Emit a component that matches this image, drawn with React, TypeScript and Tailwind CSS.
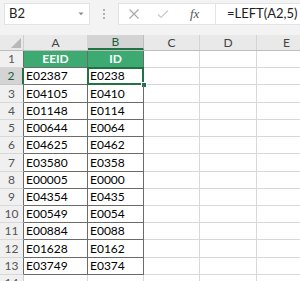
const rows: [string, string][] = [
  ["E02387", "E0238"],
  ["E04105", "E0410"],
  ["E01148", "E0114"],
  ["E00644", "E0064"],
  ["E04625", "E0462"],
  ["E03580", "E0358"],
  ["E00005", "E0000"],
  ["E04354", "E0435"],
  ["E00549", "E0054"],
  ["E00884", "E0088"],
  ["E01628", "E0162"],
  ["E03749", "E0374"],
];

const heights = [17, 17, 18, 17, 17, 17, 18, 17, 17, 17, 17, 18, 17, 17];

const FormulaBar = () => (
  <div className="h-[35px] bg-[#f3f3f3] flex items-start pt-[3px]">
    <div className="ml-[4px] w-[86px] h-[22px] bg-white border border-[#e3e3e3] flex items-center justify-between pl-[4px] pr-[5px]">
      <span className="text-[13px] text-[#222]">B2</span>
      <svg width="6" height="4" viewBox="0 0 6 4">
        <path d="M0.5 0.5 L3 3.2 L5.5 0.5 Z" fill="#8a8a8a" />
      </svg>
    </div>
    <div className="w-[28px] h-[22px] flex flex-col items-center justify-center gap-[2px]">
      <div className="w-[2px] h-[2px] bg-[#b0b0b0]" />
      <div className="w-[2px] h-[2px] bg-[#b0b0b0]" />
      <div className="w-[2px] h-[2px] bg-[#b0b0b0]" />
    </div>
    <div className="flex-1 h-[22px] bg-white border border-[#e3e3e3] border-r-0 flex items-center">
      <div className="w-[96px] h-full flex items-center">
        <svg width="12" height="12" viewBox="0 0 12 12" className="ml-[9px]">
          <path d="M1.5 1.5 L10.5 10.5 M10.5 1.5 L1.5 10.5" stroke="#a8a8a8" strokeWidth="1.2" />
        </svg>
        <svg width="12" height="10" viewBox="0 0 12 10" className="ml-[17px]">
          <path d="M1 5.5 L4 8.5 L11 1.5" stroke="#c8c8c8" strokeWidth="1.2" fill="none" />
        </svg>
        <span className="ml-[21px] text-[13px] italic text-[#555]" style={{ fontFamily: '"Liberation Serif", serif' }}>
          fx
        </span>
      </div>
      <div className="w-px h-full bg-[#e3e3e3]" />
      <span className="ml-[11px] text-[13px] text-[#222]">=LEFT(A2,5)</span>
    </div>
  </div>
);

export default function App() {
  const colHeaders = ["A", "B", "C", "D", "E"];
  const colWidths = ["w-[64px]", "w-[56px]", "w-[56px]", "w-[57px]", "w-[60px]"];

  return (
    <div className="w-[300px] h-[281px] overflow-hidden bg-white" style={{ fontFamily: "Lato, 'Open Sans', sans-serif" }}>
      <FormulaBar />
      <div className="flex h-[16px] bg-[#e9e9e9] border-b border-[#bdbdbd]">
        <div className="w-[24px] shrink-0 border-r border-[#cfcfcf] flex items-end justify-end pr-[2px] pb-[2px]">
          <svg width="10" height="10" viewBox="0 0 10 10">
            <path d="M10 0 L10 10 L0 10 Z" fill="#b8b8b8" />
          </svg>
        </div>
        {colHeaders.map((c, i) => (
          <div
            key={c}
            className={`${colWidths[i]} shrink-0 flex items-center justify-center text-[12px] leading-none border-r ${
              c === "B" ? "bg-[#d4d4d4] text-[#1e5c3a] border-[#bdbdbd] border-b-2 border-b-[#217346]" : "text-[#444] border-[#d4d4d4]"
            }`}
          >
            {c}
          </div>
        ))}
      </div>
      {heights.map((h, r) => {
        const n = r + 1;
        const inTable = n <= 13;
        const selRow = n === 2;
        const cellA = n === 1 ? "EEID" : inTable ? rows[n - 2][0] : "";
        const cellB = n === 1 ? "ID" : inTable ? rows[n - 2][1] : "";
        const head = n === 1;
        return (
          <div key={n} className="flex" style={{ height: h }}>
            <div
              className={`w-[24px] shrink-0 flex items-center justify-center text-[12px] border-b border-r ${
                selRow
                  ? "bg-[#d4d4d4] text-[#1e5c3a] border-r-2 border-r-[#217346] border-b-[#c8c8c8]"
                  : "bg-[#f0f0f0] text-[#555] border-b-[#d8d8d8] " + (inTable ? "border-r-[#6b6b6b]" : "border-r-[#cfcfcf]")
              }`}
            >
              {n}
            </div>
            <div
              className={`w-[64px] shrink-0 flex items-center text-[12px] border-r border-b ${
                head
                  ? "bg-[#3daa72] text-white font-bold justify-center border-[#6b6b6b]"
                  : inTable
                  ? "pl-[2px] text-black border-[#6b6b6b]"
                  : "border-[#d8d8d8]"
              }`}
            >
              {cellA}
            </div>
            <div
              className={`relative w-[56px] shrink-0 flex items-center text-[12px] border-r border-b ${
                head
                  ? "bg-[#3daa72] text-white font-bold justify-center border-[#6b6b6b]"
                  : inTable
                  ? "pl-[2px] text-black border-[#6b6b6b]"
                  : "border-[#d8d8d8]"
              }`}
            >
              {cellB}
              {selRow && (
                <>
                  <div className="absolute -left-[1px] -top-[1px] -right-[1px] -bottom-[1px] border-2 border-[#217346]" />
                  <div className="absolute -right-[4px] -bottom-[4px] w-[6px] h-[6px] bg-[#217346] border border-white" />
                </>
              )}
            </div>
            <div className="w-[56px] shrink-0 border-r border-b border-[#d8d8d8]" />
            <div className="w-[57px] shrink-0 border-r border-b border-[#d8d8d8]" />
            <div className="w-[60px] shrink-0 border-b border-[#d8d8d8]" />
          </div>
        );
      })}
    </div>
  );
}
